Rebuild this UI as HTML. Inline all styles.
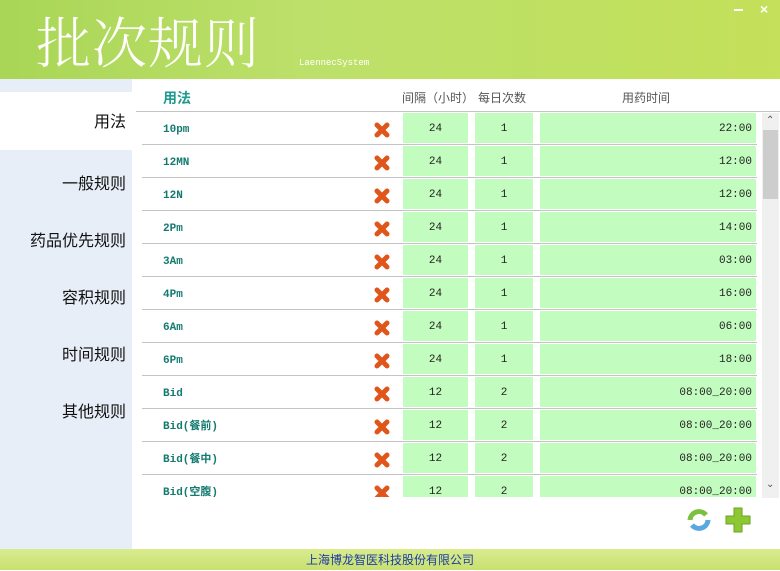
<!DOCTYPE html>
<html><head><meta charset="utf-8"><style>
*{margin:0;padding:0;box-sizing:border-box}
body{width:780px;height:570px;overflow:hidden;background:#fff;position:relative;font-family:"Liberation Sans","Noto Sans CJK SC",sans-serif}
#hd{position:absolute;left:0;top:0;width:780px;height:79px;background:linear-gradient(90deg,#a9d656 0%,#bde06a 40%,#bfe060 75%,#c5e05a 100%)}
#hd .t{position:absolute;left:36px;top:0px;font-family:"Noto Serif CJK SC",serif;font-size:55px;color:#fff;letter-spacing:1px;font-weight:300}
#hd .s{position:absolute;left:299px;top:58px;font-family:"Liberation Mono",monospace;font-size:9px;color:#fff}
#side{position:absolute;left:0;top:79px;width:132px;height:470px;background:#e7eef7}
.sel{position:absolute;left:0;top:92px;width:136px;height:58px;background:#fff}
.si{position:absolute;left:0;width:126px;text-align:right;font-size:16px;color:#111;font-family:"Noto Sans CJK SC",sans-serif}
.hdr{position:absolute;top:89px;font-size:12px;color:#555;font-family:"Noto Sans CJK SC",sans-serif}
.row{position:absolute;left:10px;width:615px;height:33px;border-bottom:1px solid #c4c4c4}
.nm{position:absolute;left:21px;top:11px;line-height:14px;height:14px;font-family:"Liberation Mono","Noto Sans CJK SC",monospace;font-weight:bold;font-size:11px;color:#137a70}
.g{position:absolute;top:1px;height:30px;background:#c3fcbf;font-family:"Liberation Mono",monospace;font-size:11px;color:#222;line-height:32px}
.x{position:absolute;left:232px;top:10px;width:16px;height:16px}
#sb{position:absolute;left:762px;top:113px;width:17px;height:385px;background:#f0f0f0}
#ft{position:absolute;left:0;top:549px;width:780px;height:21px;background:linear-gradient(#d9ec8f,#c8e070);text-align:center;font-size:12px;color:#1a3aa8;line-height:22px;font-family:"Noto Sans CJK SC",sans-serif}
</style></head><body>
<div id="hd"><div class="t">批次规则</div><div class="s">LaennecSystem</div>
<div style="position:absolute;left:734px;top:9px;width:9px;height:2px;background:#fff"></div>
<div style="position:absolute;left:760px;top:1px;color:#fff;font-size:14px;font-weight:bold">×</div></div>
<div id="side"></div>
<div class="sel"></div>
<div class="si" style="top:108px">用法</div>
<div class="si" style="top:170px">一般规则</div>
<div class="si" style="top:227px">药品优先规则</div>
<div class="si" style="top:284px">容积规则</div>
<div class="si" style="top:341px">时间规则</div>
<div class="si" style="top:398px">其他规则</div>
<div style="position:absolute;left:163px;top:88px;font-size:14px;font-weight:bold;color:#1f9a8e;font-family:'Noto Sans CJK SC',sans-serif">用法</div>
<div class="hdr" style="left:402px">间隔（小时）</div>
<div class="hdr" style="left:478px">每日次数</div>
<div class="hdr" style="left:622px">用药时间</div>
<div style="position:absolute;left:136px;top:111px;width:644px;border-bottom:1px solid #c4c4c4"></div>
<div style="position:absolute;left:132px;top:112px;width:630px;height:385px;overflow:hidden">
<div id="rows"></div>
</div>
<div id="sb"><div style="position:absolute;left:4px;top:2px;font-size:10px;color:#555">&#8963;</div>
<div style="position:absolute;left:1px;top:17px;width:15px;height:69px;background:#cdcdcd"></div>
<div style="position:absolute;left:4px;top:366px;font-size:10px;color:#555">&#8964;</div></div>
<svg style="position:absolute;left:686px;top:507px" width="26" height="26" viewBox="0 0 26 26"><path d="M4 13a9 9 0 0 1 16-5" stroke="#7cc040" stroke-width="5" fill="none"/><path d="M22 13a9 9 0 0 1-16 5" stroke="#5aa8e0" stroke-width="5" fill="none"/></svg>
<svg style="position:absolute;left:725px;top:507px" width="26" height="26" viewBox="0 0 26 26"><path d="M9 1h8v8h8v8h-8v8h-8v-8h-8v-8h8z" fill="#8cc832" stroke="#6ea020" stroke-width="1"/></svg>
<div id="ft">上海博龙智医科技股份有限公司</div>
<script>
var d=[["10pm",24,1,"22:00"],["12MN",24,1,"12:00"],["12N",24,1,"12:00"],["2Pm",24,1,"14:00"],["3Am",24,1,"03:00"],["4Pm",24,1,"16:00"],["6Am",24,1,"06:00"],["6Pm",24,1,"18:00"],["Bid",12,2,"08:00_20:00"],["Bid(餐前)",12,2,"08:00_20:00"],["Bid(餐中)",12,2,"08:00_20:00"],["Bid(空腹)",12,2,"08:00_20:00"]];
var h="";d.forEach(function(r,i){h+='<div class="row" style="top:'+(33*i)+'px"><div class="nm">'+r[0]+'</div><svg class="x" viewBox="0 0 16 16"><path d="M3 3L13 13M13 3L3 13" stroke="#e0561a" stroke-width="5" stroke-linecap="round"/></svg><div class="g" style="left:261px;width:65px;text-align:center">'+r[1]+'</div><div class="g" style="left:333px;width:58px;text-align:center">'+r[2]+'</div><div class="g" style="left:398px;width:216px;text-align:right;padding-right:4px">'+r[3]+'</div></div>';});
document.getElementById("rows").innerHTML=h;
</script>
</body></html>
